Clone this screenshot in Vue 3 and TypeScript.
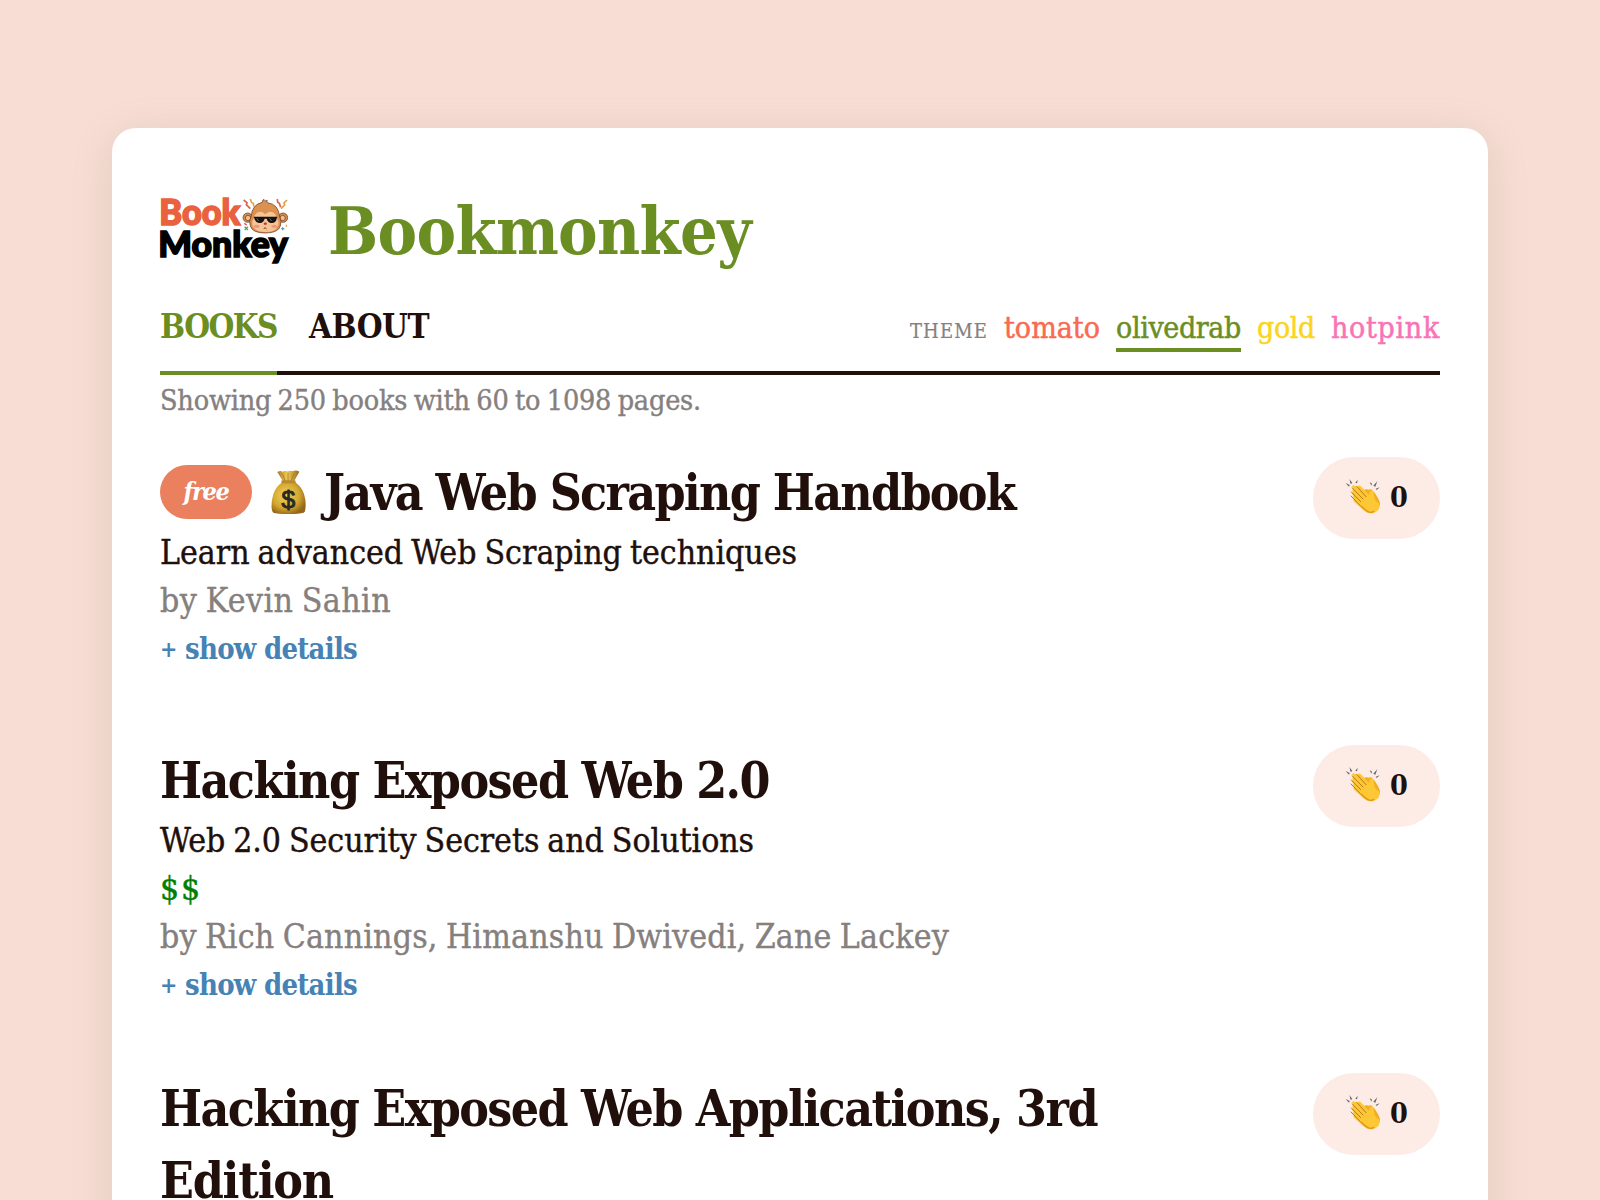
<script setup lang="ts">
import type { Directive } from 'vue'

interface Line { text: string; width: number }
interface Book {
  id: number
  title: Line[]
  free?: boolean
  subtitle?: Line
  price?: Line
  authors?: Line
  likes: number
}

/* Tracks a text run so that it takes up the given advance width. */
const vFit: Directive<HTMLElement, number> = {
  mounted(el, { value }) {
    const length = (el.textContent ?? '').trim().length
    const natural = el.getBoundingClientRect().width
    el.style.letterSpacing = `${(value - natural) / length}px`
  },
}

const themes = [
  { name: 'tomato', color: '#fa6a50', width: 96 },
  { name: 'olivedrab', color: '#6b8e23', width: 125 },
  { name: 'gold', color: '#fbd51c', width: 58 },
  { name: 'hotpink', color: '#f973b6', width: 109 },
]
const active = 'olivedrab'

const books: Book[] = [
  {
    id: 1,
    free: true,
    title: [{ text: 'Java Web Scraping Handbook', width: 691 }],
    subtitle: { text: 'Learn advanced Web Scraping techniques', width: 637 },
    authors: { text: 'by Kevin Sahin', width: 231 },
    likes: 0,
  },
  {
    id: 2,
    title: [{ text: 'Hacking Exposed Web 2.0', width: 609 }],
    subtitle: { text: 'Web 2.0 Security Secrets and Solutions', width: 594 },
    price: { text: '$$', width: 42 },
    authors: { text: 'by Rich Cannings, Himanshu Dwivedi, Zane Lackey', width: 789 },
    likes: 0,
  },
  {
    id: 3,
    title: [
      { text: 'Hacking Exposed Web Applications, 3rd', width: 937 },
      { text: 'Edition', width: 173 },
    ],
    likes: 0,
  },
]
</script>

<template>
  <div class="page">
    <main class="card">
      <header class="header">
        <svg class="logo" viewBox="30 45 396 216" role="img" aria-label="Book Monkey">
          <g fill="none" stroke-width="5" stroke-linejoin="miter">
            <path d="M281 57l10 8-2 6 12 12" stroke="#d9634b" />
            <path d="M301 54l4 11 5 2 2 10" stroke="#e5a33c" />
            <path d="M411 57l-9 9 2 6-11 11" stroke="#e5a33c" />
            <path d="M382 54l1 10 5 3 4 12" stroke="#d9634b" />
          </g>
          <g stroke-width="4" fill="none">
            <path d="M284 137l10 10M294 137l-10 10" stroke="#55a95a" />
            <path d="M283 127l7 5" stroke="#d64b6a" />
            <path d="M398 139v9M394 143h9" stroke="#4ba3b5" />
            <path d="M409 131v6" stroke="#e5a33c" />
          </g>
          <g stroke="#5c3620" stroke-width="2">
            <circle cx="293" cy="110" r="14" fill="#d98a4c" />
            <circle cx="399" cy="110" r="14" fill="#d98a4c" />
            <circle cx="294" cy="111" r="8" fill="#f4bd8d" />
            <circle cx="398" cy="111" r="8" fill="#f4bd8d" />
            <path d="M337 64q-1-7 5-9 0 4 3 6 3-4 7-3-2 3 0 7 34 4 37 43 7 12 2 27-6 21-45 21t-45-21q-5-15 2-27 3-38 34-44z" fill="#dc9150" />
            <path d="M346 100q-11-13-25-5-8 5-9 17-8 10-4 22 7 19 38 19t38-19q4-12-4-22-1-12-9-17-14-8-25 5z" fill="#f7c595" stroke="none" />
          </g>
          <ellipse cx="320" cy="136" rx="9" ry="5" fill="#f39482" />
          <ellipse cx="373" cy="136" rx="9" ry="5" fill="#f39482" />
          <path d="M311 107h71l-2 6q-3 14-16 13-11-1-14-13h-6q-3 12-14 13-14 0-17-14z" fill="#171310" />
          <path d="M320 112l6 8M359 112l6 8" stroke="#8c8c8c" stroke-width="2" />
          <ellipse cx="346" cy="128" rx="5" ry="3.5" fill="#b63a39" />
          <path d="M341 143q5-6 9 1" fill="none" stroke="#66351e" stroke-width="3" />
          <text class="wordmark" x="28" y="132" fill="#ea6140" stroke="#ea6140" textLength="243" lengthAdjust="spacingAndGlyphs">Book</text>
          <text class="wordmark" x="25" y="228" fill="#000" stroke="#000" textLength="389" lengthAdjust="spacingAndGlyphs">Monkey</text>
        </svg>
        <h1><span v-fit="423">Bookmonkey</span></h1>
      </header>

      <nav class="nav">
        <div class="links">
          <a class="link current"><span v-fit="117">BOOKS</span></a>
          <a class="link"><span v-fit="120">ABOUT</span></a>
        </div>
        <div class="themes">
          <span v-fit="78" class="label">THEME</span>
          <span
            v-for="theme in themes"
            :key="theme.name"
            v-fit="theme.width"
            class="theme"
            :class="{ active: theme.name === active }"
            :style="{ color: theme.color }"
          >{{ theme.name }}</span>
        </div>
      </nav>

      <p class="summary"><span v-fit="541">Showing 250 books with 60 to 1098 pages.</span></p>

      <article v-for="book in books" :key="book.id" class="book" :class="{ free: book.free }">
        <div class="info">
          <h2>
            <template v-if="book.free">
              <span class="badge"><span v-fit="45">free</span></span>
              <svg class="money" viewBox="363 60 105 135" aria-hidden="true">
                <defs>
                  <radialGradient id="bag" cx=".42" cy=".42" r=".62">
                    <stop offset="0" stop-color="#f3d45c" />
                    <stop offset=".65" stop-color="#d2a52f" />
                    <stop offset="1" stop-color="#94681a" />
                  </radialGradient>
                  <linearGradient id="neck">
                    <stop offset="0" stop-color="#a8771f" />
                    <stop offset=".45" stop-color="#f0cb58" />
                    <stop offset="1" stop-color="#94681a" />
                  </linearGradient>
                </defs>
                <path d="M400 96L382 66q10-5 15-1 8-4 16-1 7-4 14 0 12-5 21 1l-17 31z" fill="url(#neck)" />
                <path d="M398 72l8 22M414 68v26M431 71l-8 23" stroke="#98701e" stroke-width="2" />
                <path d="M397 96h38q27 20 31 53 3 35-5 39-13 4-46 4t-45-4q-8-5-4-39 4-33 31-53z" fill="url(#bag)" />
                <rect x="394" y="91" width="43" height="9" rx="4" fill="#b98a2b" />
                <text class="dollar" x="415" y="173" text-anchor="middle">$</text>
              </svg>
            </template>
            <span class="title">
              <span v-for="line in book.title" :key="line.text" class="title-line"><span v-fit="line.width">{{ line.text }}</span></span>
            </span>
          </h2>
          <p v-if="book.subtitle"><span v-fit="book.subtitle.width">{{ book.subtitle.text }}</span></p>
          <p v-if="book.price" class="price"><span v-fit="book.price.width">{{ book.price.text }}</span></p>
          <p v-if="book.authors" class="authors"><span v-fit="book.authors.width">{{ book.authors.text }}</span></p>
          <p v-if="book.authors" class="details"><span class="plus">+</span><span v-fit="172">show details</span></p>
        </div>
        <button class="clap" type="button">
          <svg viewBox="135 100 111 111" aria-hidden="true">
            <g fill="#62646a">
              <path d="M137 115l12 6-2 5z" />
              <path d="M148 103l9 12-5 3z" />
              <path d="M173 105l-2 11-5-2z" />
              <path d="M209 112l7 5-2 6z" />
              <path d="M232 110l-6 16-6-3z" />
              <path d="M239 128l-9 8-3-4z" />
            </g>
            <path d="M190 137q8-6 17-2 6-4 11 3 9 7 12 16 10 15 10 24-3 20-24 15l-30-28z" fill="#f2ae22" />
            <path d="M155 127q2-8 10-4l8 2q5-5 11 1l23 25q1-13 8-14 7 1 7 17 1 10 7 17 11 4 10 15-1 9-11 15-8 7-17 5-9 0-19-8l-29-26q-5-5-1-9-6-5-2-10-7-7-2-11-3-7 2-11z" fill="#fdc736" />
            <path d="M157 130l32 33M154 142l28 29M153 154l27 28M171 126l27 30" fill="none" stroke="#b97819" stroke-width="3" stroke-linecap="round" />
            <path d="M182 183q12 12 22 18 10 5 18-2" fill="none" stroke="#df941d" stroke-width="4" />
          </svg>
          <span class="count">{{ book.likes }}</span>
        </button>
      </article>
    </main>
  </div>
</template>

<style>
body {
  background: #f7ddd4;
  overflow: hidden;
}
</style>

<style scoped>
.page {
  box-sizing: border-box;
  height: 1200px;
  padding: 128px 112px 0;
  overflow: hidden;
  background: #f7ddd4;
  color: #200f0a;
  font-family: 'DejaVu Serif Condensed', 'DejaVu Serif', serif;
  font-stretch: condensed;
  font-size: 33.5px;
  line-height: 48px;
  white-space: nowrap;
}
.card {
  box-sizing: border-box;
  height: 1240px;
  padding: 56px 48px 0;
  border-radius: 24px;
  background: #fff;
  box-shadow: 0 8px 40px rgba(140, 140, 105, 0.2);
}
h1, h2, p { margin: 0; }
.header {
  display: flex;
  align-items: center;
  height: 92px;
}
.logo {
  width: 132px;
  height: 72px;
  margin: 3px 36px 0 0;
  overflow: visible;
}
.wordmark {
  font-family: Lato, sans-serif;
  font-weight: 900;
  font-size: 106px;
  stroke-width: 5px;
}
h1 {
  padding-top: 1px;
  color: #6b8e23;
  font-size: 66px;
  line-height: 92px;
}
.nav {
  display: flex;
  justify-content: space-between;
  height: 95px;
  border-bottom: 4px solid #200f0a;
}
.links {
  display: flex;
  gap: 32px;
  padding-top: 27px;
  font-size: 33px;
  font-weight: bold;
}
.link { height: 68px; }
.current {
  color: #6b8e23;
  border-bottom: 4px solid #6b8e23;
}
.themes {
  display: flex;
  gap: 16px;
  align-items: baseline;
  padding-top: 33px;
  font-size: 30px;
  line-height: 38px;
  -webkit-text-stroke: 0.5px currentColor;
}
.label {
  color: #85807e;
  font-size: 20px;
  -webkit-text-stroke: 0.2px currentColor;
}
.active {
  padding-bottom: 1px;
  border-bottom: 4px solid #6b8e23;
}
.summary {
  height: 79px;
  padding-top: 2px;
  color: #85807e;
  font-size: 28.5px;
}
.info p,
.summary {
  word-spacing: -1.5px;
  -webkit-text-stroke: 0.4px currentColor;
}
.book {
  display: flex;
  justify-content: space-between;
  align-items: flex-start;
  padding-bottom: 64px;
}
.book.free { padding-bottom: 72px; }
.info p {
  position: relative;
  top: 1px;
  height: 48px;
}
h2 {
  display: flex;
  font-size: 49.5px;
  line-height: 72px;
}
.title {
  position: relative;
  top: 1px;
}
.title-line { display: block; }
.badge {
  display: flex;
  justify-content: center;
  box-sizing: border-box;
  width: 92px;
  height: 54px;
  margin-top: 9px;
  border-radius: 27px;
  background: #ea805e;
  color: #fff;
  font-size: 25px;
  font-style: italic;
  line-height: 53px;
}
.money {
  width: 35px;
  height: 45px;
  margin: 14px 18px 0 19px;
}
.dollar {
  font-family: 'Liberation Sans', sans-serif;
  font-size: 74px;
  font-weight: 400;
  fill: #2b2a22;
  stroke: #2b2a22;
  stroke-width: 3px;
}
.price { color: #008000; }
.authors { color: #85807e; }
.info .details {
  display: flex;
  color: #4682b4;
  font-size: 29px;
  font-weight: bold;
  word-spacing: 0;
  -webkit-text-stroke: 0;
}
.plus {
  width: 25px;
  font-size: 23px;
}
.clap {
  display: flex;
  align-items: center;
  box-sizing: border-box;
  width: 127px;
  height: 82px;
  margin-top: 1px;
  padding: 0 0 4px 32px;
  border: 0;
  border-radius: 41px;
  background: #fcece5;
  color: #200f0a;
  font: bold 28.5px/48px 'DejaVu Serif Condensed', 'DejaVu Serif', serif;
}
.clap svg {
  width: 37px;
  height: 37px;
  margin-right: 8px;
}
.count { padding-top: 2px; }
</style>
